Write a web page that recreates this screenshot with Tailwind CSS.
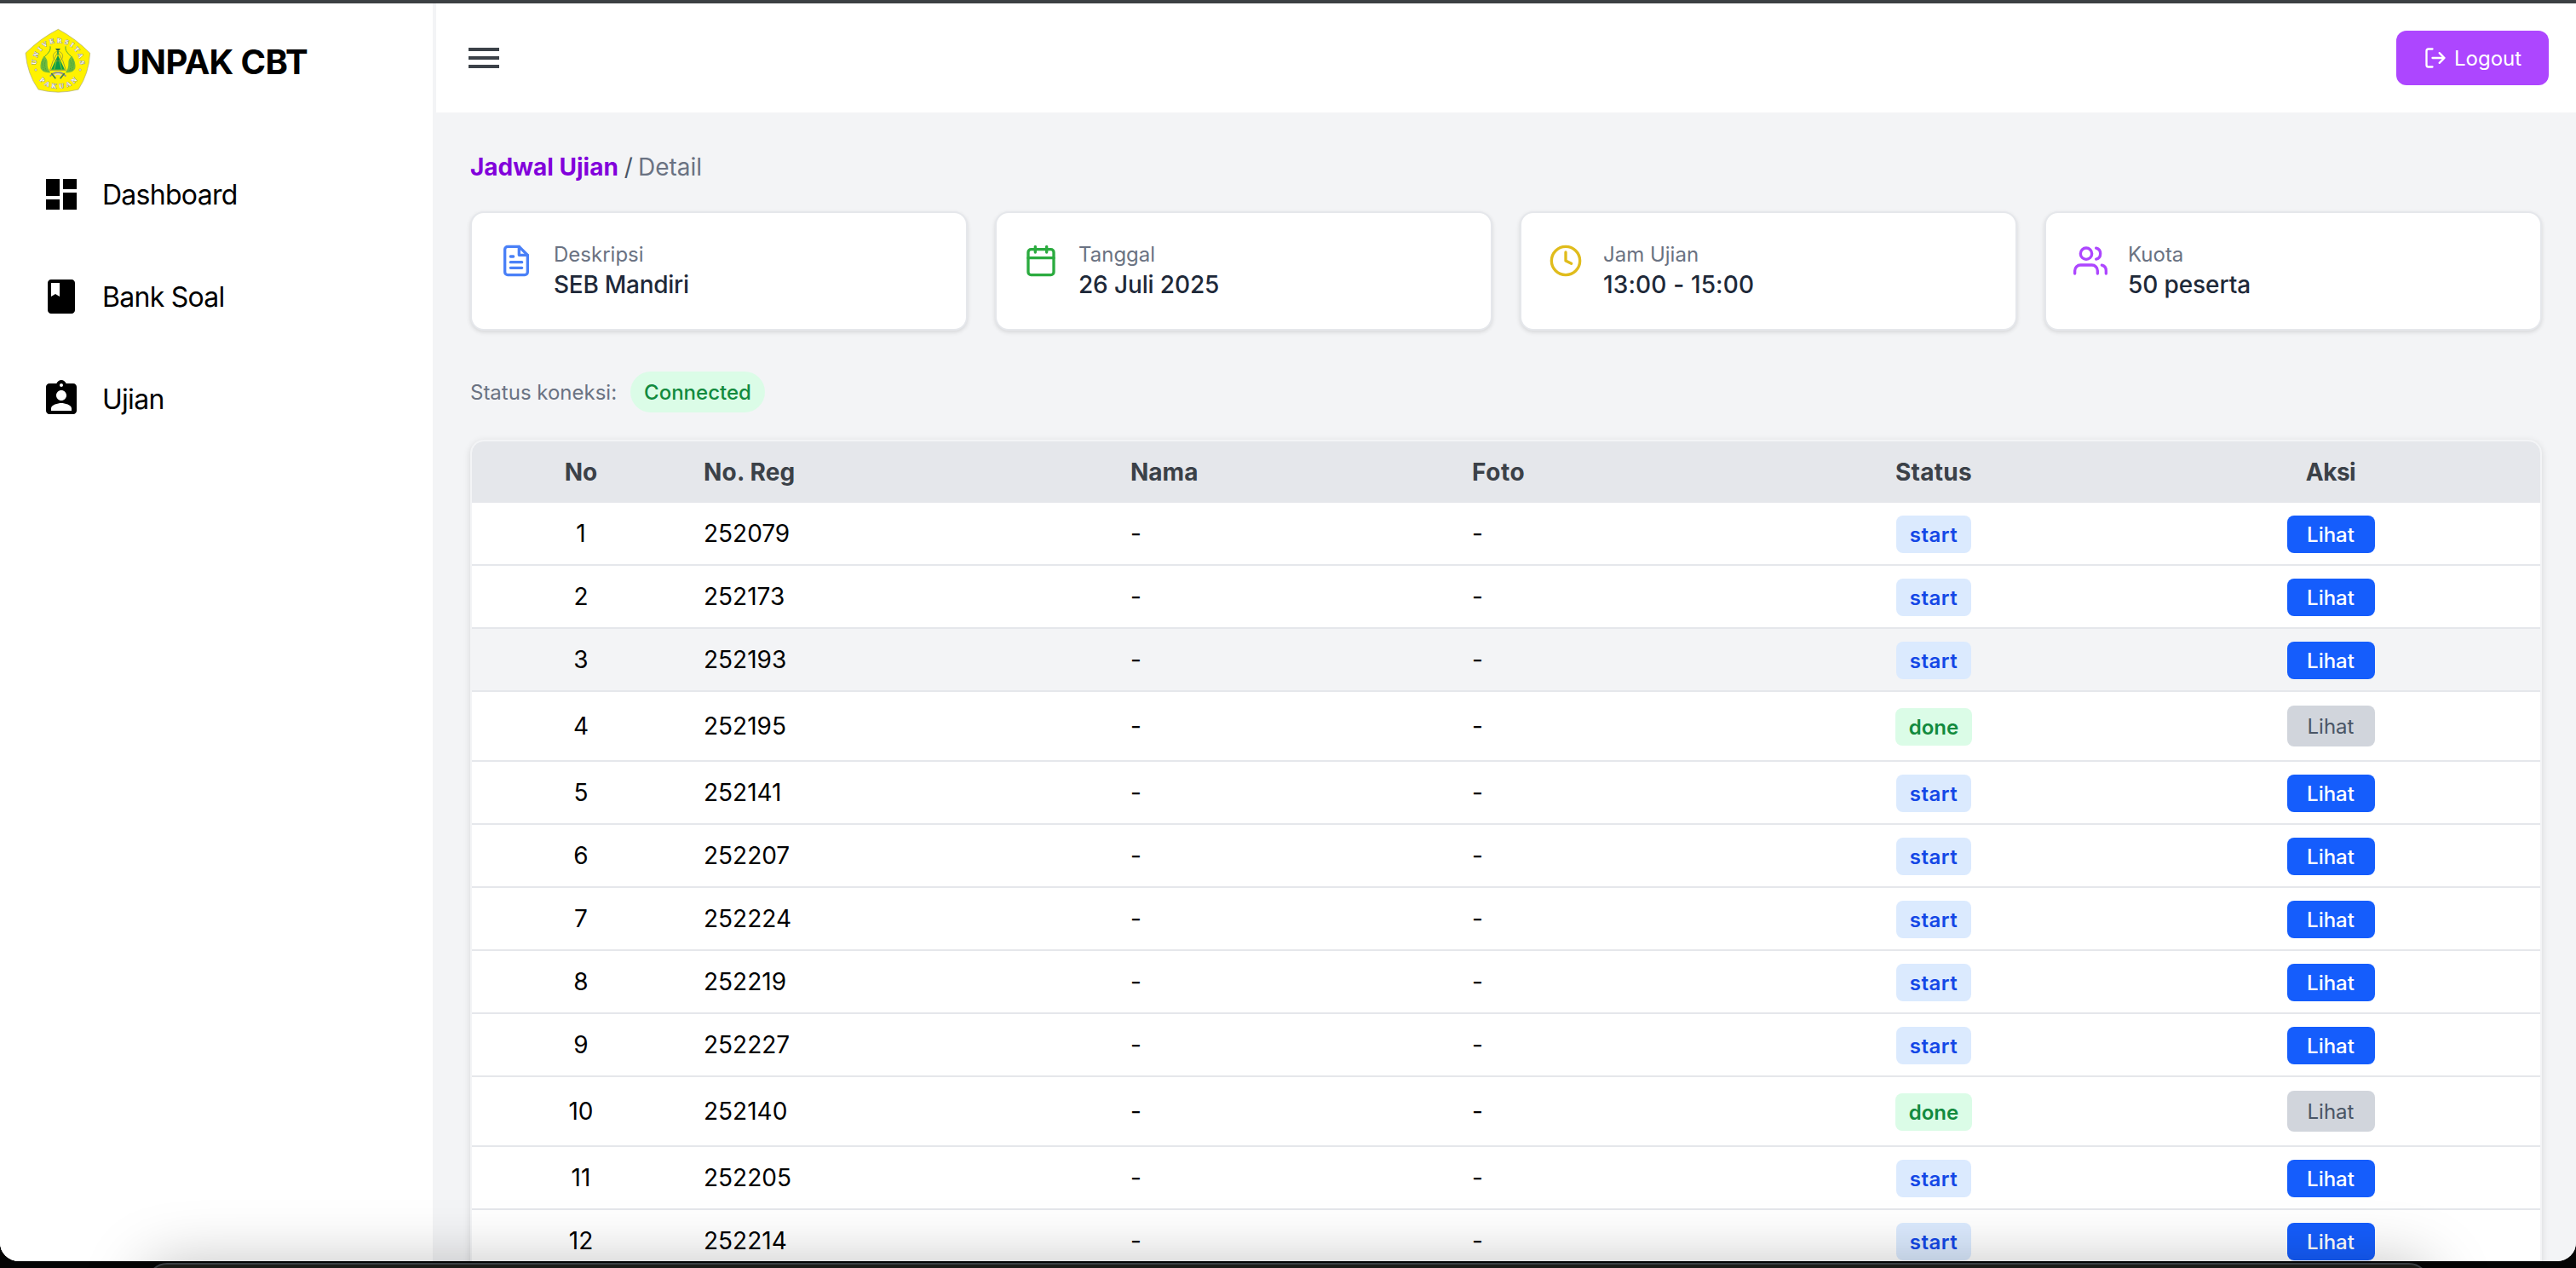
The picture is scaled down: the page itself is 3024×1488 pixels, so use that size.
<!DOCTYPE html>
<html lang="id">
<head>
<meta charset="utf-8">
<title>UNPAK CBT</title>
<script src="https://cdn.jsdelivr.net/npm/@tailwindcss/browser@4"></script>
</head>
<body class="relative h-[1488px] w-[3024px] overflow-hidden bg-[#050505] font-[Inter,sans-serif] text-black">
<div class="flex h-[1480px] flex-col overflow-hidden rounded-b-[22px] bg-white">
  <div class="h-1 shrink-0 bg-[#3c4043]"></div>
  <div class="flex min-h-0 flex-1 bg-gray-100">

    <!-- Sidebar -->
    <aside class="mr-1 w-[508px] shrink-0 bg-white">
      <div class="flex h-[144px] items-start pl-5 pt-[21px]">
        <svg class="size-[100px]" viewBox="0 0 300 300">
          <path d="M145 28Q208 62 257 112Q253 185 216 240Q145 259 75 240Q36 185 30 112Q82 60 145 28Z" fill="#fff200" stroke="#a9a878" stroke-width="2"/>
          <defs>
            <path id="arcTop" d="M67 153A78 78 0 1 1 223 153"/>
            <path id="arcBottom" d="M75 203Q100 236 145 236Q190 236 215 203"/>
          </defs>
          <g font-family="Liberation Serif" font-weight="700" fill="#fff" stroke="#8a8a94" stroke-width="2.4" paint-order="stroke">
            <text font-size="23"><textPath href="#arcTop" startOffset="0" textLength="244">UNIVERSITAS</textPath></text>
            <text font-size="23"><textPath href="#arcBottom" startOffset="6" textLength="150">PAKUAN</textPath></text>
          </g>
          <circle cx="66" cy="171" r="3.5" fill="#fff" stroke="#77778a" stroke-width="1.6"/>
          <circle cx="222" cy="171" r="3.5" fill="#fff" stroke="#77778a" stroke-width="1.6"/>
          <g fill="none" stroke="#4bab3c" stroke-width="3">
            <path d="M117 88Q120 104 104 117Q94 126 92 134"/>
            <path d="M171 88Q168 104 184 117Q194 126 196 134"/>
          </g>
          <path d="M95 122Q80 142 83 166Q92 184 118 180Q106 168 107 148Q108 132 95 122Z" fill="#72bb3e"/>
          <path d="M193 122Q208 142 205 166Q196 184 170 180Q182 168 181 148Q180 132 193 122Z" fill="#72bb3e"/>
          <path d="M92 134Q87 155 95 172M100 138Q94 156 103 174M196 134Q201 155 193 172M188 138Q194 156 185 174" fill="none" stroke="#27933c" stroke-width="2.5" stroke-dasharray="4 3"/>
          <path d="M144 108Q122 142 116 172H172Q166 142 144 108Z" fill="none" stroke="#8a9440" stroke-width="2.5"/>
          <path d="M144 119L120 170H168Z" fill="#0b9b49"/>
          <path d="M139 136L131 169M149 136L157 169" stroke="#fff200" stroke-width="1.6"/>
          <circle cx="144" cy="123" r="17" fill="none" stroke="#8a9440" stroke-width="2"/>
          <path d="M135 96H153L148 103H140Z" fill="#2c6048"/>
          <path d="M144 103V119" stroke="#0b9b49" stroke-width="4"/>
          <path d="M116 194Q130 178 144 181Q158 178 172 194" fill="none" stroke="#8d8d9b" stroke-width="5"/>
          <path d="M121 183L136 202M167 183L152 202" stroke="#3f7d50" stroke-width="5"/>
          <path d="M133 190Q144 181 155 190" fill="none" stroke="#d6d0df" stroke-width="5"/>
        </svg>
        <h1 class="ml-4 mt-6 text-[40px]/[48px] font-bold tracking-[-0.66px]">UNPAK CBT</h1>
      </div>
      <nav class="mt-[20px] flex flex-col text-[32px]/[48px] tracking-[-0.72px]">
        <a class="flex h-[120px] items-center gap-6 pl-12">
          <svg class="size-12" viewBox="0 0 24 24"><path d="M3 13h8V3H3v10zm0 8h8v-6H3v6zm10 0h8V11h-8v10zm0-18v6h8V3h-8z"/></svg><span class="pt-0.5">Dashboard</span></a>
        <a class="flex h-[120px] items-center gap-6 pl-12">
          <svg class="size-12" viewBox="0 0 24 24"><path d="M18 2H6c-1.100 0-2 .9-2 2v16c0 1.100.9 2 2 2h12c1.100 0 2-.9 2-2V4c0-1.100-.9-2-2-2zM6 4h5v8l-2.500-1.500L6 12V4z"/></svg><span class="pt-0.5">Bank Soal</span></a>
        <a class="flex h-[120px] items-center gap-6 pl-12">
          <svg class="size-12" viewBox="0 0 24 24"><path d="M19 3h-4.180C14.400 1.840 13.300 1 12 1c-1.300 0-2.400.84-2.820 2H5c-1.100 0-2 .9-2 2v14c0 1.100.9 2 2 2h14c1.100 0 2-.9 2-2V5c0-1.100-.9-2-2-2zm-7 0c.55 0 1 .45 1 1s-.45 1-1 1-1-.45-1-1 .45-1 1-1zm0 4c1.660 0 3 1.340 3 3s-1.340 3-3 3-3-1.340-3-3 1.340-3 3-3zm6 12H6v-1.400c0-2 4-3.100 6-3.100s6 1.100 6 3.100V19z"/></svg><span class="pt-0.5">Ujian</span></a>
      </nav>
    </aside>

    <div class="flex min-w-0 flex-1 flex-col">
      <!-- Top bar -->
      <header class="flex h-32 shrink-0 items-center justify-between bg-white pl-8 pr-8">
        <svg class="size-12 fill-[#3b4148]" viewBox="0 0 24 24"><path d="M3 18h18v-2H3v2zm0-5h18v-2H3v2zm0-7v2h18V6H3z"/></svg>
        <button class="flex h-16 w-[179px] items-center gap-2 rounded-xl bg-[#ad46ff] pl-8 text-2xl text-white">
          <svg class="size-7 shrink-0" viewBox="0 0 24 24" fill="none" stroke="currentColor" stroke-width="2" stroke-linecap="round" stroke-linejoin="round"><path d="M9 21H5a2 2 0 0 1-2-2V5a2 2 0 0 1 2-2h4M16 17l5-5-5-5M21 12H9"/></svg>
          <span class="pt-0.5">Logout</span>
        </button>
      </header>

      <main class="flex flex-col px-10 pt-11">
        <div class="text-[28px]/[40px] text-gray-500"><span class="font-bold text-[#8200db]">Jadwal Ujian</span><span class="ml-[7px] mr-1.5 text-gray-600">/</span>Detail</div>

        <section class="mt-8 grid grid-cols-4 gap-8">
          <div class="flex h-[140px] items-start gap-6 rounded-2xl border-2 border-gray-200 bg-white p-8 shadow-[0_2px_5px_rgba(0,0,0,0.12)]">
            <svg class="mt-1 size-10 text-[#4a80f7]" viewBox="0 0 24 24" fill="none" stroke="currentColor" stroke-width="2" stroke-linecap="round" stroke-linejoin="round"><path d="M14 2H6a2 2 0 0 0-2 2v16a2 2 0 0 0 2 2h12a2 2 0 0 0 2-2V8z"/><path d="M14 2v6h6M16 13H8M16 17H8M10 9H8"/></svg>
            <div><p class="h-8 pt-px text-2xl/8 text-gray-500">Deskripsi</p><p class="text-[28px]/[40px] font-medium tracking-[-0.27px] text-gray-800">SEB Mandiri</p></div>
          </div>
          <div class="flex h-[140px] items-start gap-6 rounded-2xl border-2 border-gray-200 bg-white p-8 shadow-[0_2px_5px_rgba(0,0,0,0.12)]">
            <svg class="mt-1 size-10 text-[#2bab3f]" viewBox="0 0 24 24" fill="none" stroke="currentColor" stroke-width="2" stroke-linecap="round" stroke-linejoin="round"><rect x="3" y="4" width="18" height="18" rx="2"/><path d="M16 2v4M8 2v4M3 10h18"/></svg>
            <div><p class="h-8 pt-px text-2xl/8 text-gray-500">Tanggal</p><p class="text-[28px]/[40px] font-medium tracking-[-0.13px] text-gray-800">26 Juli 2025</p></div>
          </div>
          <div class="flex h-[140px] items-start gap-6 rounded-2xl border-2 border-gray-200 bg-white p-8 shadow-[0_2px_5px_rgba(0,0,0,0.12)]">
            <svg class="mt-1 size-10 text-[#e0bc1c]" viewBox="0 0 24 24" fill="none" stroke="currentColor" stroke-width="2" stroke-linecap="round" stroke-linejoin="round"><circle cx="12" cy="12" r="10"/><path d="M12 6v6l4 2"/></svg>
            <div><p class="h-8 pt-px text-2xl/8 text-gray-500">Jam Ujian</p><p class="text-[28px]/[40px] font-medium tracking-[0.15px] text-gray-800">13:00 - 15:00</p></div>
          </div>
          <div class="flex h-[140px] items-start gap-6 rounded-2xl border-2 border-gray-200 bg-white p-8 shadow-[0_2px_5px_rgba(0,0,0,0.12)]">
            <svg class="mt-1 size-10 text-[#ad46ff]" viewBox="0 0 24 24" fill="none" stroke="currentColor" stroke-width="2" stroke-linecap="round" stroke-linejoin="round"><path d="M17 21v-2a4 4 0 0 0-4-4H5a4 4 0 0 0-4 4v2"/><circle cx="9" cy="7" r="4"/><path d="M23 21v-2a4 4 0 0 0-3-3.870M16 3.130a4 4 0 0 1 0 7.750"/></svg>
            <div><p class="h-8 pt-px text-2xl/8 text-gray-500">Kuota</p><p class="text-[28px]/[40px] font-medium tracking-[-0.1px] text-gray-800">50 peserta</p></div>
          </div>
        </section>

        <div class="mt-12 flex items-center gap-4 text-2xl/8">
          <span class="pt-0.5 text-gray-500">Status koneksi:</span>
          <span class="rounded-full bg-green-100 px-4 pb-[7px] pt-[9px] font-medium text-[#128a3e]">Connected</span>
        </div>

        <div class="mt-8 overflow-hidden rounded-2xl border-2 border-gray-100 bg-white shadow-[0_2px_8px_rgba(0,0,0,0.12)]">
          <table class="w-full table-fixed border-collapse text-[28px]/[40px]">
            <colgroup><col class="w-[256px]"><col class="w-[501px]"><col class="w-[401px]"><col class="w-[338px]"><col class="w-[440px]"><col class="w-[492px]"></colgroup>
            <thead class="bg-gray-200 font-bold text-[#3b4148]">
              <tr class="h-[72px]"><th>No</th><th class="px-4 text-left tracking-[0.2px]">No. Reg</th><th class="px-4 text-left">Nama</th><th class="px-4 text-left tracking-[0.6px]">Foto</th><th class="tracking-[0.27px]">Status</th><th class="tracking-[-0.5px]">Aksi</th></tr>
            </thead>
            <tbody id="rows"></tbody>
          </table>
        </div>
      </main>
    </div>
  </div>
</div>

<!-- Dock edge under the window and the shadow it casts -->
<div class="absolute left-[172px] top-[1482px] h-20 w-[2680px] rounded-t-[24px] border-2 border-[#3b3f43] bg-[#1c1c18] shadow-[0_4px_75px_rgba(0,0,0,0.27)]"></div>

<script>
  const students = [
    ['252079', 0], ['252173', 0], ['252193', 0], ['252195', 1], ['252141', 0], ['252207', 0],
    ['252224', 0], ['252219', 0], ['252227', 0], ['252140', 1], ['252205', 0], ['252214', 0],
  ];
  document.getElementById('rows').innerHTML = students.map(([reg, done], i) => `
    <tr class="${done ? 'h-[82px]' : 'h-[74px]'} ${i === 2 ? 'bg-gray-100' : 'bg-white'} shadow-[inset_0_-2px_0_#e5e7eb]">
      <td class="pb-0.5 text-center">${i + 1}</td>
      <td class="px-4 pb-0.5">${reg}</td>
      <td class="px-4 pb-0.5">-</td>
      <td class="px-4 pb-0.5">-</td>
      <td class="text-center align-middle"><div class="flex justify-center"><span class="flex h-11 items-center justify-center rounded-lg pt-0.5 text-2xl font-semibold ${done ? 'w-[90px] bg-green-100 text-[#128a3e]' : 'w-[88px] bg-blue-100 tracking-[0.5px] text-[#1447e6]'}">${done ? 'done' : 'start'}</span></div></td>
      <td class="text-center align-middle"><div class="flex justify-center ${done ? 'pb-0.5' : ''}"><button class="flex w-[103px] items-center justify-center rounded-lg pt-0.5 text-2xl ${done ? 'h-12 bg-[#d1d5dc] text-gray-600' : 'h-11 bg-[#155dfc] font-medium text-white'}">Lihat</button></div></td>
    </tr>`).join('');
</script>
</body>
</html>
